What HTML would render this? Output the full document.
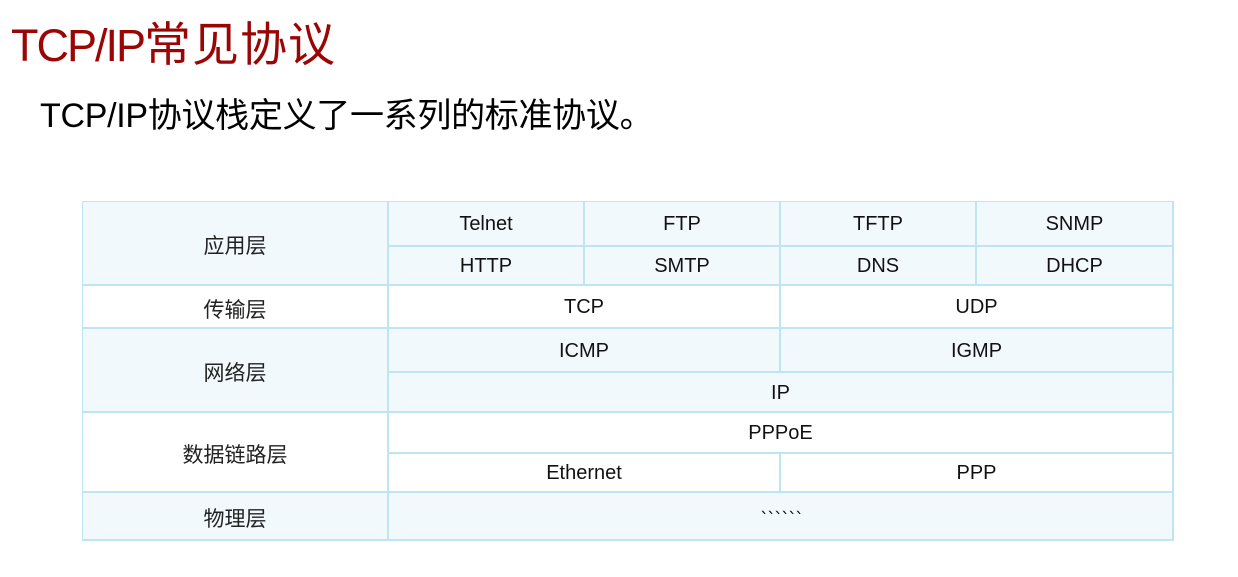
<!DOCTYPE html><html><head><meta charset="utf-8"><style>
body{margin:0;width:1238px;height:577px;background:#fff;position:relative;overflow:hidden;font-family:"Liberation Sans","Noto Sans CJK SC",sans-serif}
.t{position:absolute;left:11px;top:6px;font-size:45px;color:#9a0505;letter-spacing:-2px;white-space:nowrap}
.t span{font-size:47px;letter-spacing:1px}
.s{position:absolute;left:40px;top:88px;font-size:34px;color:#000;white-space:nowrap;letter-spacing:-0.3px}
.c{position:absolute;display:flex;align-items:center;justify-content:center;font-size:20px;color:#111;box-sizing:border-box;border:1px solid #bfe4f4;margin:-1px 0 0 -1px;padding-top:2px}
.b{background:#f2f9fd}
.z{font-size:21px;color:#222;padding-top:4px}
</style></head><body>
<div class="t">TCP/IP<span>常见协议</span></div>
<div class="s">TCP/IP协议栈定义了一系列的标准协议。</div>
<div style="position:absolute;left:82px;top:201px;width:1092px;height:340px;border:1px solid #bfe4f4;box-sizing:border-box"></div>
<div class="c b z" style="left:83px;top:202px;width:306px;height:84px">应用层</div>
<div class="c b" style="left:389px;top:202px;width:196px;height:45px">Telnet</div>
<div class="c b" style="left:585px;top:202px;width:196px;height:45px">FTP</div>
<div class="c b" style="left:781px;top:202px;width:196px;height:45px">TFTP</div>
<div class="c b" style="left:977px;top:202px;width:197px;height:45px">SNMP</div>
<div class="c b" style="left:389px;top:247px;width:196px;height:39px">HTTP</div>
<div class="c b" style="left:585px;top:247px;width:196px;height:39px">SMTP</div>
<div class="c b" style="left:781px;top:247px;width:196px;height:39px">DNS</div>
<div class="c b" style="left:977px;top:247px;width:197px;height:39px">DHCP</div>
<div class="c z" style="left:83px;top:286px;width:306px;height:43px">传输层</div>
<div class="c" style="left:389px;top:286px;width:392px;height:43px">TCP</div>
<div class="c" style="left:781px;top:286px;width:393px;height:43px">UDP</div>
<div class="c b z" style="left:83px;top:329px;width:306px;height:84px">网络层</div>
<div class="c b" style="left:389px;top:329px;width:392px;height:44px">ICMP</div>
<div class="c b" style="left:781px;top:329px;width:393px;height:44px">IGMP</div>
<div class="c b" style="left:389px;top:373px;width:785px;height:40px">IP</div>
<div class="c z" style="left:83px;top:413px;width:306px;height:80px">数据链路层</div>
<div class="c" style="left:389px;top:413px;width:785px;height:41px">PPPoE</div>
<div class="c" style="left:389px;top:454px;width:392px;height:39px">Ethernet</div>
<div class="c" style="left:781px;top:454px;width:393px;height:39px">PPP</div>
<div class="c b z" style="left:83px;top:493px;width:306px;height:48px">物理层</div>
<div class="c b" style="left:389px;top:493px;width:785px;height:48px"></div>
<div style="position:absolute;left:760px;top:508px;font-size:18px;line-height:24px;color:#111;font-family:'DejaVu Sans',sans-serif;letter-spacing:-2px;z-index:5">ˋˋˋˋˋˋ</div>
</body></html>
